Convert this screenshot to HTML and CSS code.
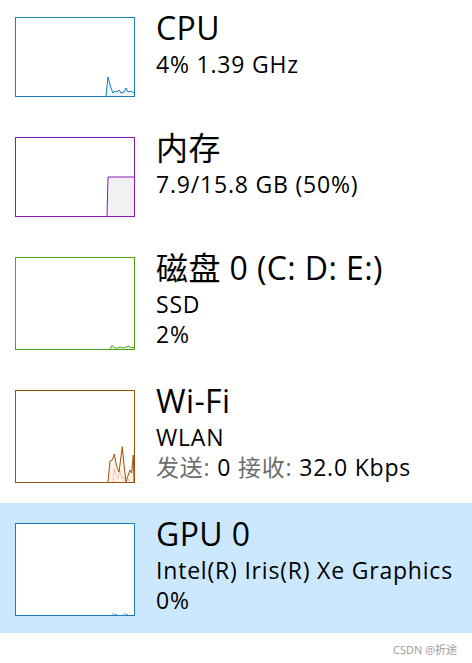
FILE: index.html
```html
<!DOCTYPE html>
<html lang="zh-CN">
<head>
<meta charset="utf-8">
<title>性能</title>
<link rel="stylesheet" href="styles.css">
</head>
<body>
<div class="list">
  <div class="row first">
    <div class="graph cpu short">
      <svg viewBox="0 0 118 78" preserveAspectRatio="none">
        <path class="fill" d="M90 78 L92 59 L95 70 L97 75 L99 73 L101 74 L103 72 L105 75 L108 74 L110 70 L112 74 L115 73 L118 75 L118 78 Z"/>
        <path class="line" d="M90 78 L92 59 L95 70 L97 75 L99 73 L101 74 L103 72 L105 75 L108 74 L110 70 L112 74 L115 73 L118 75"/>
      </svg>
    </div>
    <div class="info">
      <div class="title">CPU</div>
      <div class="sub">4% 1.39 GHz</div>
    </div>
  </div>

  <div class="row">
    <div class="graph mem short">
      <svg viewBox="0 0 118 78" preserveAspectRatio="none">
        <path class="fill" d="M91 78 L92 39 L118 39 L118 78 Z"/>
        <path class="line" d="M91 78 L92 39 L118 39"/>
      </svg>
    </div>
    <div class="info">
      <div class="title">内存</div>
      <div class="sub">7.9/15.8 GB (50%)</div>
    </div>
  </div>

  <div class="row">
    <div class="graph disk tall">
      <svg viewBox="0 0 118 91" preserveAspectRatio="none">
        <path class="fill" d="M94 91 L96 87.5 L99 90 L102 90 L104 89 L107 90 L110 89 L113 88 L115 90 L117 89 L118 90 L118 91 Z"/>
        <path class="line" d="M94 91 L96 87.5 L99 90 L102 90 L104 89 L107 90 L110 89 L113 88 L115 90 L117 89 L118 90"/>
      </svg>
    </div>
    <div class="info">
      <div class="title">磁盘 0 (C: D: E:)</div>
      <div class="sub">SSD</div>
      <div class="sub">2%</div>
    </div>
  </div>

  <div class="row">
    <div class="graph wifi tall">
      <svg viewBox="0 0 118 91" preserveAspectRatio="none">
        <path class="fill" d="M92 91 L94 70 L96.3 69 L98.3 63 L100.7 75.7 L103 81 L106.3 55.7 L108 74 L110 90.7 L112.3 84 L114 79 L115.7 82 L117.3 64 L118 91 Z"/>
        <path class="dots" d="M97 91 L98 78 L100 84 L102 88 L104 80 L106 88 L108 86 L110 91 L112 88 L114 90"/>
        <path class="line" d="M92 91 L94 70 L96.3 69 L98.3 63 L100.7 75.7 L103 81 L106.3 55.7 L108 74 L110 90.7 L112.3 84 L114 79 L115.7 82 L117.3 64 L118 91"/>
      </svg>
    </div>
    <div class="info">
      <div class="title">Wi-Fi</div>
      <div class="sub">WLAN</div>
      <div class="sub"><span class="label">发送:</span> 0 <span class="label">接收:</span> 32.0 Kbps</div>
    </div>
  </div>

  <div class="row last selected">
    <div class="graph gpu tall">
      <svg viewBox="0 0 118 91" preserveAspectRatio="none">
        <path class="line faint" d="M96 90.5 L97.5 89.5 L99 90.5 L101 90.5 M107 90.5 L108.5 89.5 L110 90.5 L112 90.5"/>
      </svg>
    </div>
    <div class="info">
      <div class="title">GPU 0</div>
      <div class="sub">Intel(R) Iris(R) Xe Graphics</div>
      <div class="sub">0%</div>
    </div>
  </div>
</div>
<div class="footer">CSDN @折途</div>
</body>
</html>
```
FILE: styles.css
```css
html, body {
  margin: 0;
  padding: 0;
  background: #ffffff;
}
body {
  width: 472px;
  height: 663px;
  overflow: hidden;
  font-family: "Open Sans", "Noto Sans CJK SC", sans-serif;
  color: #000;
}
.list {
  display: flex;
  flex-direction: column;
}
.row {
  display: flex;
  align-items: flex-start;
  gap: 21px;
  padding: 20px 0 20px 15px;
}
.row.first {
  padding-top: 17px;
}
.row.last {
  padding-bottom: 17px;
}
.row.selected {
  background: #cce8ff;
}
.graph {
  flex: none;
  width: 120px;
  box-sizing: border-box;
  border: 1px solid;
  background: #fff;
}
.graph.short { height: 80px; }
.graph.tall { height: 93px; }
.graph svg {
  display: block;
  width: 100%;
  height: 100%;
}
.graph .line {
  fill: none;
  stroke-width: 1;
}
.cpu { border-color: #1a7bbd; }
.cpu .line { stroke: #1a7bbd; }
.cpu .fill { fill: #eef5fb; }
.mem { border-color: #8b19b3; }
.mem .line { stroke: #8b19b3; }
.mem .fill { fill: #f3f0f4; }
.disk { border-color: #4ea517; }
.disk .line { stroke: #4ea517; }
.disk .fill { fill: #eff7ea; }
.wifi { border-color: #a44f05; }
.wifi .line { stroke: #a44f05; }
.wifi .fill { fill: #fcf2ea; }
.wifi .dots { fill: none; stroke: #e99b7a; stroke-width: 1; stroke-dasharray: 1 1; }
.gpu { border-color: #1a7bbd; }
.gpu .line { stroke: #5aa7da; }
.info {
  margin-top: -11px;
  display: flex;
  flex-direction: column;
  white-space: nowrap;
}
.title {
  font-size: 32px;
  line-height: 43px;
  letter-spacing: 0.4px;
}
.sub {
  font-size: 23px;
  line-height: 30px;
  letter-spacing: 0.8px;
}
.label {
  color: #6d6d6d;
}
.footer {
  text-align: right;
  padding: 10px 15px 0 0;
  font-size: 11px;
  line-height: 13px;
  color: #9a9a9a;
}
```
